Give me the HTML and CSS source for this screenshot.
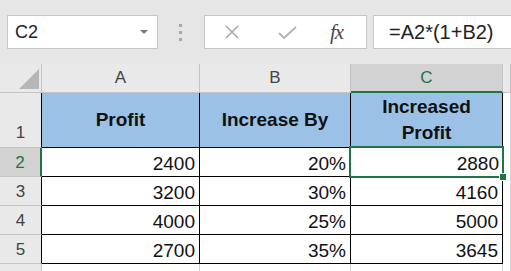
FILE: index.html
```html
<!DOCTYPE html>
<html>
  <head>
    <title>Increase by percentage</title>
    <meta name="viewport" content="width=device-width, initial-scale=1" />
    <link rel="stylesheet" href="styles.css">
  </head>
  <body>
    <div class="formula-bar">
      <div class="name-box">
        <span>C2</span>
        <span class="caret"></span>
      </div>
      <div class="grip"><i></i><i></i><i></i></div>
      <div class="fx-buttons">
        <svg class="icon-x" width="16" height="14" viewBox="0 0 16 14">
          <path d="M2 1 L14 13 M14 1 L2 13" stroke="#a8a8a8" stroke-width="1.6" fill="none" />
        </svg>
        <svg class="icon-check" width="19" height="13" viewBox="0 0 19 13">
          <path d="M1 7 L6 12 L18 1" stroke="#b4b4b4" stroke-width="2" fill="none" />
        </svg>
        <span class="fx">fx</span>
      </div>
      <div class="formula">=A2*(1+B2)</div>
    </div>

    <div class="sheet">
      <!-- column headers -->
      <div class="hd corner"><div class="tri"></div></div>
      <div class="hd col">A</div>
      <div class="hd col">B</div>
      <div class="hd col active-col">C</div>
      <div class="hd col"></div>

      <!-- row 1 -->
      <div class="hd row bottom">1</div>
      <div class="cell title">Profit</div>
      <div class="cell title">Increase By</div>
      <div class="cell title">Increased<br>Profit</div>
      <div class="cell empty"></div>

      <!-- row 2 -->
      <div class="hd row active-row">2</div>
      <div class="cell num">2400</div>
      <div class="cell num">20%</div>
      <div class="cell num selected">2880<span class="handle"></span></div>
      <div class="cell empty"></div>

      <!-- row 3 -->
      <div class="hd row">3</div>
      <div class="cell num">3200</div>
      <div class="cell num">30%</div>
      <div class="cell num">4160</div>
      <div class="cell empty"></div>

      <!-- row 4 -->
      <div class="hd row">4</div>
      <div class="cell num">4000</div>
      <div class="cell num">25%</div>
      <div class="cell num">5000</div>
      <div class="cell empty"></div>

      <!-- row 5 -->
      <div class="hd row">5</div>
      <div class="cell num">2700</div>
      <div class="cell num">35%</div>
      <div class="cell num">3645</div>
      <div class="cell empty"></div>

      <!-- row 6, only its top edge shows -->
      <div class="hd row plain"></div>
      <div class="cell empty"></div>
      <div class="cell empty"></div>
      <div class="cell empty"></div>
      <div class="cell empty"></div>
    </div>
  </body>
</html>
```

FILE: styles.css
```css
/* Page */
body {
  margin: 0;
  width: 511px;
  height: 271px;
  overflow: hidden;
  background-color: #e6e6e6;
  font-family: "Liberation Sans", Arial, sans-serif;
  color: #111;
}

/* Formula bar */
.formula-bar {
  display: flex;
  align-items: flex-start;
  height: 64px;
  box-sizing: border-box;
  padding: 15px 0 0 7px;
}

.name-box {
  display: flex;
  flex-shrink: 0;
  align-items: center;
  justify-content: space-between;
  width: 151px;
  height: 34px;
  box-sizing: border-box;
  padding: 0 9px 0 7px;
  background-color: #fff;
  border: 1px solid #c6c6c6;
  font-size: 18px;
  color: #222;
}

.caret {
  width: 0;
  height: 0;
  border-left: 4px solid transparent;
  border-right: 4px solid transparent;
  border-top: 4px solid #7a7a7a;
}

.grip {
  display: flex;
  flex-shrink: 0;
  flex-direction: column;
  gap: 4px;
  margin: 9px 22px 0 21px;
}

.grip i {
  display: block;
  width: 3px;
  height: 3px;
  background-color: #a8a8a8;
}

.fx-buttons {
  display: flex;
  flex-shrink: 0;
  align-items: center;
  width: 163px;
  height: 34px;
  box-sizing: border-box;
  padding-left: 19px;
  background-color: #fff;
  border: 1px solid #c6c6c6;
}

.icon-check {
  margin-left: 38px;
}

.fx {
  margin-left: 33px;
  font-family: "Liberation Serif", "Times New Roman", serif;
  font-style: italic;
  font-size: 21px;
  color: #4a4a4a;
  letter-spacing: -1px;
}

.formula {
  display: flex;
  flex-shrink: 0;
  align-items: center;
  width: 160px;
  height: 34px;
  box-sizing: border-box;
  margin-left: 6px;
  padding-left: 15px;
  background-color: #fff;
  border: 1px solid #c6c6c6;
  border-right: none;
  font-size: 20px;
  color: #222;
}

/* Sheet grid */
.sheet {
  display: grid;
  grid-template-columns: 42px 158px 151px 152px 1fr;
  grid-template-rows: 29px 55px 29px 29px 29px 29px 8px;
  background-color: #fff;
}

.sheet > div {
  box-sizing: border-box;
  border-right: 1px solid #d4d4d4;
  border-bottom: 1px solid #d4d4d4;
}

/* Headers */
.hd {
  display: flex;
  align-items: center;
  justify-content: center;
  background-color: #e9e9e9;
  font-size: 17px;
  color: #444;
}

.sheet > .hd {
  border-color: #c4c4c4;
}

.corner {
  align-items: flex-end;
  justify-content: flex-end;
  padding: 0 2px 3px 0;
}

.tri {
  width: 20px;
  height: 20px;
  background-color: #b6b6b6;
  clip-path: polygon(100% 0, 100% 100%, 0 100%);
}

.sheet > .row {
  border-right-color: #000;
  padding-top: 2px;
}

.sheet > .row.bottom {
  align-items: flex-end;
  padding-bottom: 4px;
}

.sheet > .row.plain {
  border-right-color: #c4c4c4;
  border-bottom: none;
}

.sheet > .active-col {
  background-color: #d2d2d2;
  color: #217346;
  border-bottom: 2px solid #217346;
}

.sheet > .active-row {
  background-color: #d2d2d2;
  color: #217346;
  border-right: 2px solid #217346;
}

/* Cells */
.sheet > .cell {
  border-color: #000;
}

.sheet > .empty {
  border-color: #d4d4d4;
  border-bottom: none;
}

.title {
  display: flex;
  align-items: center;
  justify-content: center;
  background-color: #9bc2e6;
  font-weight: bold;
  font-size: 19px;
  line-height: 26px;
  text-align: center;
}

.num {
  display: flex;
  align-items: center;
  justify-content: flex-end;
  padding: 3px 4px 0 0;
  font-size: 19px;
}

.selected {
  position: relative;
  padding-right: 3px;
}

.selected::after {
  content: "";
  position: absolute;
  left: -2px;
  top: -2px;
  right: -2px;
  bottom: -2px;
  border: 2px solid #217346;
}

.handle {
  position: absolute;
  right: -5px;
  bottom: -5px;
  width: 6px;
  height: 6px;
  background-color: #217346;
  border: 1px solid #fff;
  z-index: 1;
}
```
